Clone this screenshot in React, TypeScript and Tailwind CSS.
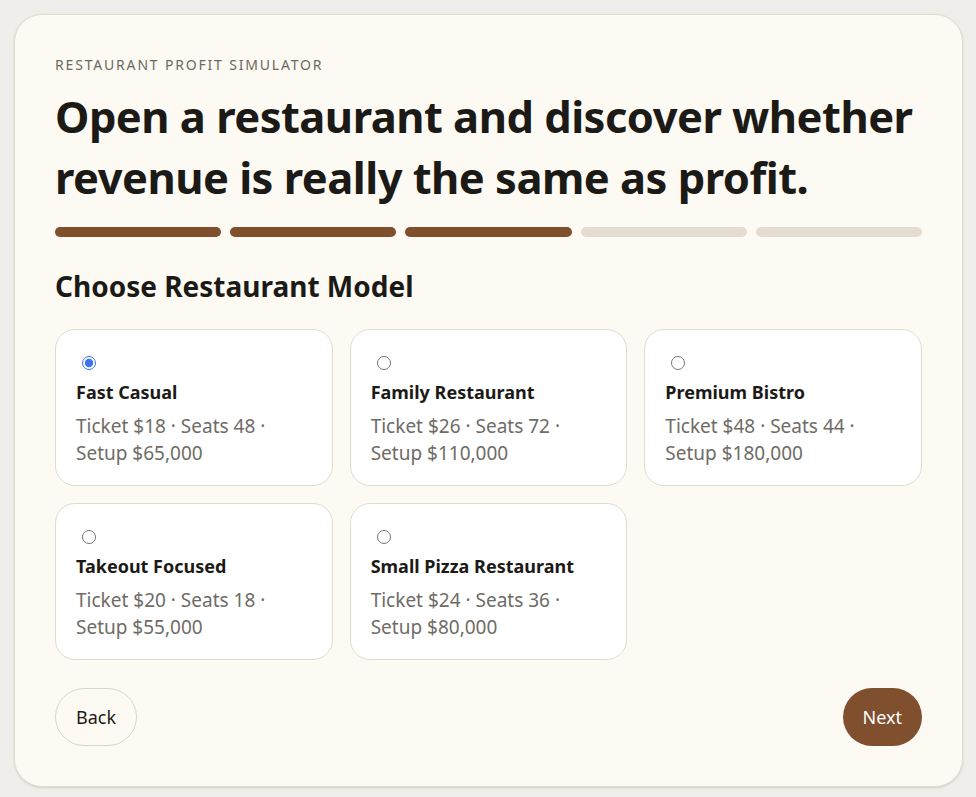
import { useState } from "react";

interface Model {
  name: string;
  ticket: number;
  seats: number;
  setup: string;
}

const models: Model[] = [
  { name: "Fast Casual", ticket: 18, seats: 48, setup: "65,000" },
  { name: "Family Restaurant", ticket: 26, seats: 72, setup: "110,000" },
  { name: "Premium Bistro", ticket: 48, seats: 44, setup: "180,000" },
  { name: "Takeout Focused", ticket: 20, seats: 18, setup: "55,000" },
  { name: "Small Pizza Restaurant", ticket: 24, seats: 36, setup: "80,000" },
];

const steps = [true, true, true, false, false];

const App = () => {
  const [selected, setSelected] = useState(0);

  return (
    <div
      className="min-h-screen bg-[#efeeea] pl-[14px] pr-[13px] pt-[14px] pb-[11px] text-[#1c1a17]"
      style={{ fontFamily: '"Noto Sans", "Open Sans", sans-serif' }}
    >
      <div className="rounded-[28px] border border-[#e2dccf] bg-[#fdfaf3] px-[40px] pt-[39px] pb-[40px] shadow-sm">
        <p className="text-[14px] uppercase tracking-[0.13em] text-[#6b6862]">
          Restaurant Profit Simulator
        </p>
        <h1 className="mt-[11px] text-[43.5px] font-bold leading-[61px] tracking-[-0.012em]">
          Open a restaurant and discover whether revenue is really the same as profit.
        </h1>

        <div className="mt-[19px] flex gap-[9px]">
          {steps.map((done, i) => (
            <div
              key={i}
              className={`h-[10px] flex-1 rounded-full ${done ? "bg-[#7f4f2e]" : "bg-[#e6ddd2]"}`}
            />
          ))}
        </div>

        <h2 className="mt-[31px] text-[28px] font-bold leading-[36px]">Choose Restaurant Model</h2>

        <div className="mt-[25px] grid grid-cols-3 gap-x-[17px] gap-y-[17px]">
          {models.map((m, i) => (
            <label
              key={m.name}
              className="flex h-[157px] cursor-pointer flex-col rounded-[20px] border border-[#e2dccf] bg-white px-[20px] pt-[26px]"
            >
              <input
                type="radio"
                name="model"
                checked={selected === i}
                onChange={() => setSelected(i)}
                className="ml-[6px] h-[14px] w-[14px] accent-[#3d73f0]"
              />
              <span className="mt-[9px] text-[18px] font-bold leading-[26px]">{m.name}</span>
              <span className="mt-[8px] text-[19px] leading-[27px] text-[#6f6b66]">
                Ticket ${m.ticket} · Seats {m.seats} · Setup ${m.setup}
              </span>
            </label>
          ))}
        </div>

        <div className="mt-[28px] flex items-center justify-between">
          <button className="h-[58px] rounded-full border border-[#ddd6ca] px-[20px] text-[18px]">
            Back
          </button>
          <button className="h-[58px] rounded-full bg-[#7f4f2e] px-[20px] text-[18px] text-white">
            Next
          </button>
        </div>
      </div>
    </div>
  );
};

export default App;
